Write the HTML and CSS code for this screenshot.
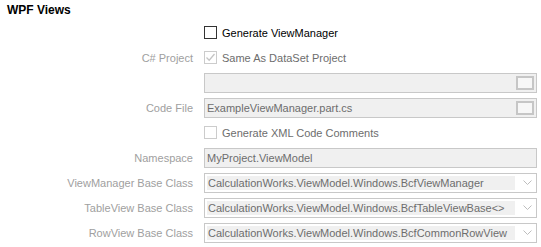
FILE: index.html
```html
<!DOCTYPE html>
<html lang="en">
<head>
  <meta charset="UTF-8" />
  <title>WPF Views</title>
  <link rel="stylesheet" href="styles.css">
</head>
<body>
  <div class="panel">
    <div class="title">WPF Views</div>

    <div class="form">
      <div class="label"></div>
      <label class="check">
        <span class="box"></span>
        <span class="check-text enabled">Generate ViewManager</span>
      </label>

      <div class="label">C# Project</div>
      <label class="check">
        <span class="box disabled">
          <svg width="11" height="11" viewBox="0 0 11 11"><path d="M1.5 5.5 L4.2 8.2 L9.5 2" fill="none" stroke="#c4c4c4" stroke-width="1.3"/></svg>
        </span>
        <span class="check-text">Same As DataSet Project</span>
      </label>

      <div class="label"></div>
      <div class="textbox">
        <span class="value"></span>
        <span class="browse"></span>
      </div>

      <div class="label">Code File</div>
      <div class="textbox">
        <span class="value">ExampleViewManager.part.cs</span>
        <span class="browse"></span>
      </div>

      <div class="label"></div>
      <label class="check">
        <span class="box disabled"></span>
        <span class="check-text">Generate XML Code Comments</span>
      </label>

      <div class="label">Namespace</div>
      <div class="textbox">
        <span class="value">MyProject.ViewModel</span>
      </div>

      <div class="label">ViewManager Base Class</div>
      <div class="combo">
        <span class="selected">CalculationWorks.ViewModel.Windows.BcfViewManager</span>
        <svg class="arrow" width="9" height="5" viewBox="0 0 9 5"><path d="M0.5 0.5 L4.5 4.5 L8.5 0.5" fill="none" stroke="#bdbdbd"/></svg>
      </div>

      <div class="label">TableView Base Class</div>
      <div class="combo">
        <span class="selected">CalculationWorks.ViewModel.Windows.BcfTableViewBase&lt;&gt;</span>
        <svg class="arrow" width="9" height="5" viewBox="0 0 9 5"><path d="M0.5 0.5 L4.5 4.5 L8.5 0.5" fill="none" stroke="#bdbdbd"/></svg>
      </div>

      <div class="label">RowView Base Class</div>
      <div class="combo">
        <span class="selected">CalculationWorks.ViewModel.Windows.BcfCommonRowView</span>
        <svg class="arrow" width="9" height="5" viewBox="0 0 9 5"><path d="M0.5 0.5 L4.5 4.5 L8.5 0.5" fill="none" stroke="#bdbdbd"/></svg>
      </div>
    </div>
  </div>
</body>
</html>
```

FILE: styles.css
```css
body {
  margin: 0;
  padding: 0;
  background: #ffffff;
  font-family: 'Liberation Sans', Arial, sans-serif;
  font-size: 11px;
}

.panel {
  width: 541px;
  height: 247px;
}

.title {
  height: 20px;
  line-height: 20px;
  padding-left: 7px;
  font-size: 12px;
  font-weight: bold;
  color: #000000;
}

.form {
  display: grid;
  grid-template-columns: 193px 333px;
  grid-auto-rows: 25px;
  column-gap: 11px;
  align-items: center;
}

.label {
  text-align: right;
  color: #a0a0a0;
}

.check {
  display: flex;
  align-items: center;
  gap: 5px;
}

.box {
  width: 11px;
  height: 11px;
  border: 1px solid #333333;
  background: #ffffff;
  display: flex;
  align-items: center;
  justify-content: center;
}

.box.disabled {
  border-color: #cccccc;
}

.check-text {
  color: #6d6d6d;
}

.check-text.enabled {
  color: #000000;
}

.textbox {
  height: 18px;
  border: 1px solid #c8c8c8;
  background: #f0f0f0;
  display: flex;
  align-items: center;
  padding: 0 2px 0 2px;
  color: #6d6d6d;
}

.textbox .value {
  flex: 1;
}

.browse {
  width: 14px;
  height: 10px;
  border: 2px solid #c6c6c6;
  background: #f7f7f7;
}

.combo {
  height: 18px;
  border: 1px solid #c8c8c8;
  background: #ffffff;
  display: flex;
  align-items: center;
  padding: 0 2px;
  color: #6d6d6d;
}

.selected {
  width: 307px;
  height: 14px;
  line-height: 14px;
  background: #f0f0f0;
  padding-left: 1px;
}

.arrow {
  margin-left: 8px;
}
```
